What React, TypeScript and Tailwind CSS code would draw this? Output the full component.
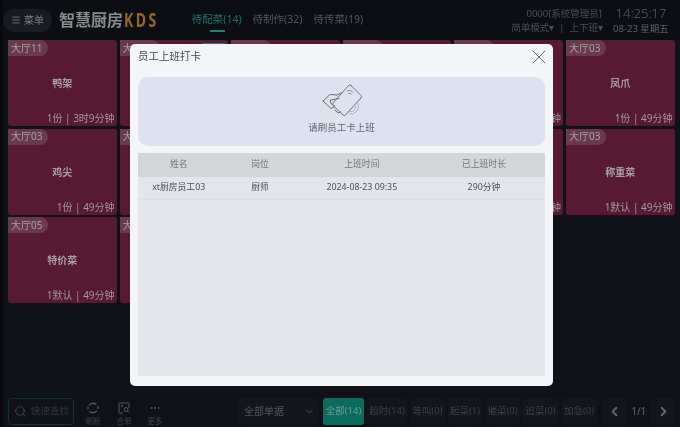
import React from 'react';
import { ChevronDown, ChevronLeft, ChevronRight, Menu, MoreHorizontal, Search, X } from 'lucide-react';

const font = 'font-["Noto_Sans","Noto_Sans_CJK_SC",sans-serif]';

type Order = { area?: string; name?: string; info?: string; tag?: boolean };

// cards behind the dialog only keep what peeks out beside it
const orders: Order[] = [
  { area: '大厅11', name: '鸭架', info: '1份 | 3时9分钟' },
  { area: '大', tag: true },
  {},
  {},
  { info: '1份 | 49分钟' },
  { area: '大厅03', name: '凤爪', info: '1份 | 49分钟' },
  { area: '大厅03', name: '鸡尖', info: '1份 | 49分钟' },
  { area: '大' },
  {},
  {},
  { info: '1份 | 49分钟' },
  { area: '大厅03', name: '称重菜', info: '1默认 | 49分钟' },
  { area: '大厅05', name: '特价菜', info: '1默认 | 49分钟' },
  { area: '大', info: '少辣 1份 | 49分钟' },
];

const filters = [
  { label: '超时(14)', width: 'w-[40px]' },
  { label: '等叫(0)', width: 'w-[34px]' },
  { label: '起菜(1)', width: 'w-[34px]' },
  { label: '催菜(0)', width: 'w-[34px]' },
  { label: '追菜(0)', width: 'w-[35px]' },
  { label: '加急(0)', width: 'w-[35px]' },
];

const OrderCard = ({ area, name, info, tag }: Order) => (
  <div className="relative h-[86px] rounded-[3px] bg-[#571a32]">
    <span className="absolute left-0 top-0 flex h-4 min-w-[40px] items-center rounded-r-full rounded-tl-[3px] bg-[#6a3a4c] pl-[3px] pr-[5px] text-[10px] text-[#a5a0a3]">
      {area}
    </span>
    {tag && <span className="absolute right-[2px] top-[3px] h-[4px] w-[25px] rounded-t-[2px] bg-[#1f7f72]" />}
    <div className="flex h-full items-center justify-center pt-[1px] text-[10px] font-bold text-[#a79fa3]">{name}</div>
    <span className="absolute bottom-0 right-[2px] whitespace-nowrap text-[10px] text-[#a2989d]">{info}</span>
  </div>
);

const CardIcon = () => (
  <svg width="50" height="40" viewBox="0 0 50 40" fill="none" stroke="#6d7076" strokeWidth="1" strokeLinejoin="round" strokeLinecap="round">
    <path d="M34 5.500 L44 15.500 Q45 17 44 18 L28.500 35 Q27.500 36 26 35 L16 25.500 Q15 24.500 16 23 L31.500 5.500 Q32.500 4.500 34 5.500 Z" />
    <path d="M6 21 L13 14.500 L20 15 L24 13" />
    <path d="M6 21 L14 28.500 L18 26.500 L13.500 23 L13.500 20 L22 18.500" />
    <path d="M18 30 L21 33 L24 32" />
    <path d="M30 11 Q33 9 36 12" stroke="#8b8e94" />
    <path d="M31.500 13.500 Q33 12.500 34.500 14" stroke="#8b8e94" />
    <path d="M41 24 Q43 28 39 32 Q36 35 33 34" stroke="#b3b6bc" />
    <path d="M38 25 Q40 28 37 30.500 Q35 32.500 33 31.500" stroke="#b3b6bc" />
  </svg>
);

const ClockInModal = () => (
  <div className="absolute left-[130px] top-[44px] flex h-[342px] w-[423px] flex-col rounded-[5px] bg-[#f3f5f8] px-2">
    <div className="flex h-[33px] shrink-0 items-center justify-between pb-[8px]">
      <span className="text-[10.500px] text-[#4a4c50]">员工上班打卡</span>
      <X className="mr-[-6px] h-6 w-6 text-[#666a70]" strokeWidth={1} />
    </div>
    <div className="flex h-[69px] shrink-0 flex-col items-center rounded-[10px] bg-[#dce3ee] pt-[3px]">
      <CardIcon />
      <span className="mt-[1px] text-[9.500px] leading-[13px] text-[#62656b]">请刷员工卡上班</span>
    </div>
    <div className="mt-[7px] flex h-[223px] flex-col bg-[#e3e5eb] text-[8.800px]">
      <div className="grid h-6 grid-cols-[1fr_1fr_1.500fr_1.500fr] items-center bg-[#d3d5d9] text-center text-[#73767b]">
        <span>姓名</span>
        <span>岗位</span>
        <span>上班时间</span>
        <span>已上班时长</span>
      </div>
      <div className="grid h-[23px] grid-cols-[1fr_1fr_1.500fr_1.500fr] items-center border-b border-[#dcdee3] text-center text-[#4c4e53]">
        <span>xt厨房员工03</span>
        <span>厨师</span>
        <span>2024-08-23 09:35</span>
        <span>290分钟</span>
      </div>
    </div>
  </div>
);

export default function App() {
  return (
    <div className={`relative flex h-[427px] w-[680px] flex-col overflow-hidden border-l-[3px] border-[#08090c] bg-[#0f1319] blur-[0.35px] ${font}`}>
      {/* top bar */}
      <header className="flex h-10 shrink-0 items-center bg-[#0c0e13] pr-[10px]">
        <div className="flex h-[23px] w-[49px] items-center justify-center gap-[3px] rounded-full bg-[#181c22] text-[10px] text-[#7c7f84]">
          <Menu className="h-[10px] w-[10px]" />
          <span>菜单</span>
        </div>
        <div className="ml-[7px] flex items-center text-[16px] font-bold leading-none text-[#8b8c8e]">
          智慧厨房
          <span className="ml-[1px] inline-block scale-y-[1.4] text-[14px] tracking-[2.500px] text-[#96672a]">KDS</span>
        </div>
        <nav className="ml-[33px] flex gap-[11px] text-[10.500px] text-[#53565b]">
          <div className="relative text-[#1c7469]">
            待配菜(14)
            <span className="absolute left-[18px] top-[18px] h-[2px] w-[15px] bg-[#1f8273]" />
          </div>
          <div>待制作(32)</div>
          <div>待传菜(19)</div>
        </nav>
        <div className="ml-auto flex flex-col items-end pt-[1px] text-[9.500px] leading-[14px] text-[#4c4f54]">
          <span className="mr-[1px]">0000[系统管理员]</span>
          <span className="flex items-center">
            简单模式▾ <span className="mx-[5px]">|</span> 上下班▾
          </span>
        </div>
        <div className="ml-[9px] flex w-[58px] flex-col items-center text-[#5d6066]">
          <span className="text-[13px] font-light leading-[17px]">14:25:17</span>
          <span className="whitespace-nowrap text-[9.500px] leading-[13px]">08-23 星期五</span>
        </div>
      </header>

      {/* order cards */}
      <main className="grid flex-1 grid-cols-6 content-start gap-x-[3px] gap-y-[2.700px] pl-[5px] pr-[5.500px]">
        {orders.map((order, i) => (
          <OrderCard key={i} {...order} />
        ))}
      </main>

      {/* bottom bar */}
      <footer className="flex h-[30px] shrink-0 items-center pb-[1px] pl-[5px] pr-[5px] text-[#3c4046]">
        <div className="flex h-[27px] w-[66px] items-center gap-[4px] rounded-[4px] border border-[#10332f] pl-[5px] text-[9.500px] text-[#33373c]">
          <Search className="h-[13px] w-[13px] shrink-0 text-[#474b50]" strokeWidth={1.5} />
          <span className="whitespace-nowrap">快速查找</span>
        </div>
        <div className="ml-[3px] flex w-[32px] flex-col items-center pt-[4px] text-[7.500px] leading-[10px]">
          <svg className="mb-[2px]" width="12" height="12" viewBox="0 0 12 12" fill="none" stroke="#565a5f" strokeWidth="1.300">
            <path d="M2 3.500 A5 5 0 0 1 9.500 2.500" />
            <path d="M10 8.500 A5 5 0 0 1 2.500 9.500" />
            <path d="M10.800 4 A5 5 0 0 1 10.800 7" />
            <path d="M1.200 4.500 A5 5 0 0 0 1.200 7.500" />
          </svg>
          刷新
        </div>
        <div className="flex w-[30px] flex-col items-center pt-[4px] text-[7.500px] leading-[10px]">
          <svg className="mb-[2px]" width="13" height="12" viewBox="0 0 13 12" fill="none" stroke="#565a5f">
            <path d="M5 11 H2 Q1 11 1 10 V2 Q1 1 2 1 H10 Q11 1 11 2 V6" />
            <circle cx="8" cy="7.500" r="2" />
            <path d="M9.500 9 L11 10.500" />
            <circle cx="4" cy="4" r="0.700" />
          </svg>
          合单
        </div>
        <div className="flex w-[32px] flex-col items-center pt-[4px] text-[7.500px] leading-[10px]">
          <MoreHorizontal className="mb-[2px] h-[12px] w-[12px] text-[#565a5f]" />
          更多
        </div>
        <div className="ml-[67px] flex h-[27px] w-[81px] items-center justify-between rounded-[3px] bg-[#13161c] pl-[6px] pr-[4px] text-[10px] text-[#54575c]">
          全部单据
          <ChevronDown className="h-[11px] w-[11px]" />
        </div>
        <div className="ml-[4px] flex h-[27px] w-[41px] items-center justify-center rounded-[3px] bg-[#0d6a5e] text-[9.500px] text-[#6d9d96]">
          全部(14)
        </div>
        <div className="ml-[3px] flex gap-[3.500px] text-[9.500px]">
          {filters.map((f) => (
            <div key={f.label} className={`flex h-[27px] ${f.width} items-center justify-center whitespace-nowrap rounded-[3px] bg-[#13161c]`}>
              {f.label}
            </div>
          ))}
        </div>
        <div className="ml-[6px] flex h-[27px] w-[24px] items-center justify-center rounded-[3px] bg-[#13161c] text-[#63676c]">
          <ChevronLeft className="h-[15px] w-[15px]" strokeWidth={3} />
        </div>
        <span className="flex-1 text-center text-[10px] text-[#63676c]">1/1</span>
        <div className="flex h-[27px] w-[24px] items-center justify-center rounded-[3px] bg-[#13161c] text-[#63676c]">
          <ChevronRight className="h-[15px] w-[15px]" strokeWidth={3} />
        </div>
      </footer>

      <div className="absolute left-[-3px] top-0">
        <ClockInModal />
      </div>
    </div>
  );
}
